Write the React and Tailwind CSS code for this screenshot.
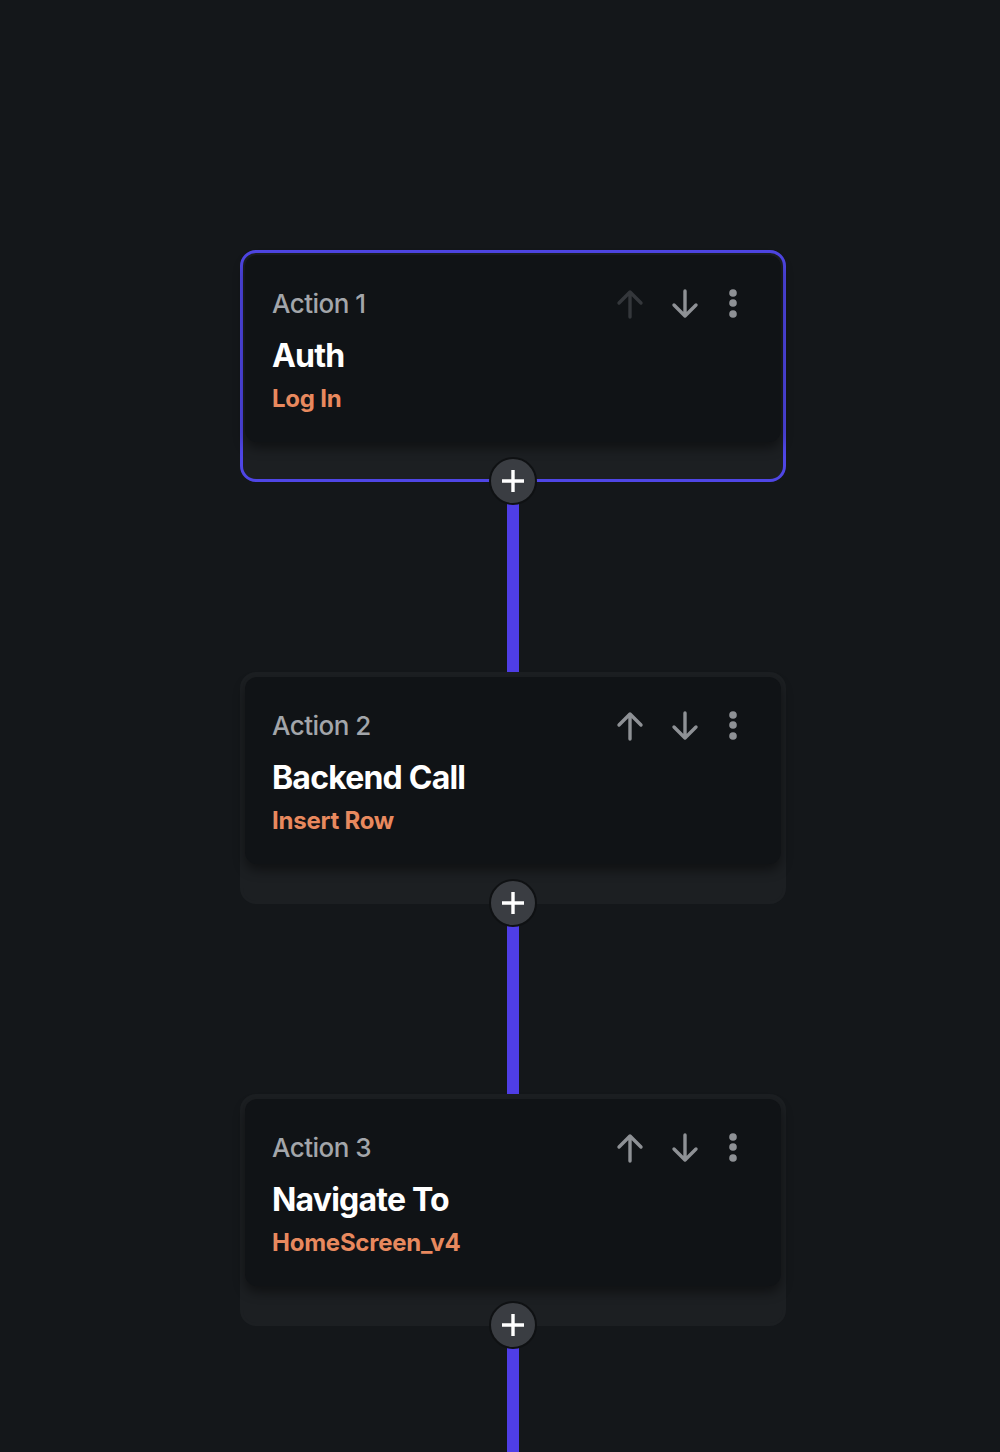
import React from 'react';

const actions = [
  { label: 'Action 1', title: 'Auth', sub: 'Log In', active: true, canUp: false },
  { label: 'Action 2', title: 'Backend Call', sub: 'Insert Row', active: false, canUp: true },
  { label: 'Action 3', title: 'Navigate To', sub: 'HomeScreen_v4', active: false, canUp: true },
];

const ArrowUp = ({ dim }) => (
  <svg width="28" height="30" viewBox="0 0 28 30" fill="none" className={dim ? 'text-[#34373b]' : 'text-[#8e9195]'}>
    <path d="M14 28V3M3 14L14 3l11 11" stroke="currentColor" strokeWidth="3.4" strokeLinecap="round" strokeLinejoin="round" />
  </svg>
);

const ArrowDown = () => (
  <svg width="28" height="30" viewBox="0 0 28 30" fill="none" className="text-[#8e9195]">
    <path d="M14 2v25M3 16l11 11 11-11" stroke="currentColor" strokeWidth="3.4" strokeLinecap="round" strokeLinejoin="round" />
  </svg>
);

const Dots = () => (
  <svg width="8" height="30" viewBox="0 0 8 30" className="text-[#8e9195]">
    <circle cx="4" cy="4" r="3.8" fill="currentColor" />
    <circle cx="4" cy="14" r="3.8" fill="currentColor" />
    <circle cx="4" cy="25" r="3.8" fill="currentColor" />
  </svg>
);

const ActionCard = ({ action }) => (
  <div
    className={`relative w-[546px] h-[232px] shrink-0 rounded-[16px] border-[3px] bg-[#1c1f22] ${
      action.active ? 'border-[#4f46e5]' : 'border-[#1c1f22]'
    }`}
  >
    {/* body */}
    <div className="m-[2px] h-[187px] rounded-[12px] bg-[#101316] shadow-[0_6px_12px_rgba(0,0,0,0.45)] pt-[33px] pl-[27px] pr-[44px]">
      <div className="flex items-center justify-between h-[32px]">
        <span className="text-[26px] leading-[32px] font-medium text-[#a3a6aa] tracking-[-0.02em]">{action.label}</span>
        <div className="flex items-center">
          <ArrowUp dim={!action.canUp} />
          <div className="ml-[27px]">
            <ArrowDown />
          </div>
          <div className="ml-[30px]">
            <Dots />
          </div>
        </div>
      </div>
      <div className="mt-[16px] text-[32px] leading-[40px] font-bold text-white tracking-[-0.025em]">{action.title}</div>
      <div className="mt-[8px] text-[24px] leading-[30px] font-bold text-[#e8895e] tracking-[-0.01em]">{action.sub}</div>
    </div>

    {/* add button */}
    <button className="absolute left-1/2 -translate-x-1/2 -bottom-[26px] z-10 w-[48px] h-[48px] rounded-full bg-[#3a3d42] border-[2px] border-[#0f1113] flex items-center justify-center">
      <svg width="22" height="22" viewBox="0 0 22 22" fill="none">
        <path d="M11 0v22M0 11h22" stroke="white" strokeWidth="3.4" />
      </svg>
    </button>
  </div>
);

export default function App() {
  return (
    <div className="h-[1452px] overflow-hidden bg-[#14171a] flex flex-col items-center pt-[250px] pl-[26px] font-['Inter',sans-serif]">
      {actions.map((a, i) => (
        <React.Fragment key={i}>
          <ActionCard action={a} />
          <div className={`w-[12px] shrink-0 bg-[#4f3ee6] ${i === actions.length - 1 ? 'h-[200px]' : 'h-[190px]'}`} />
        </React.Fragment>
      ))}
    </div>
  );
}
